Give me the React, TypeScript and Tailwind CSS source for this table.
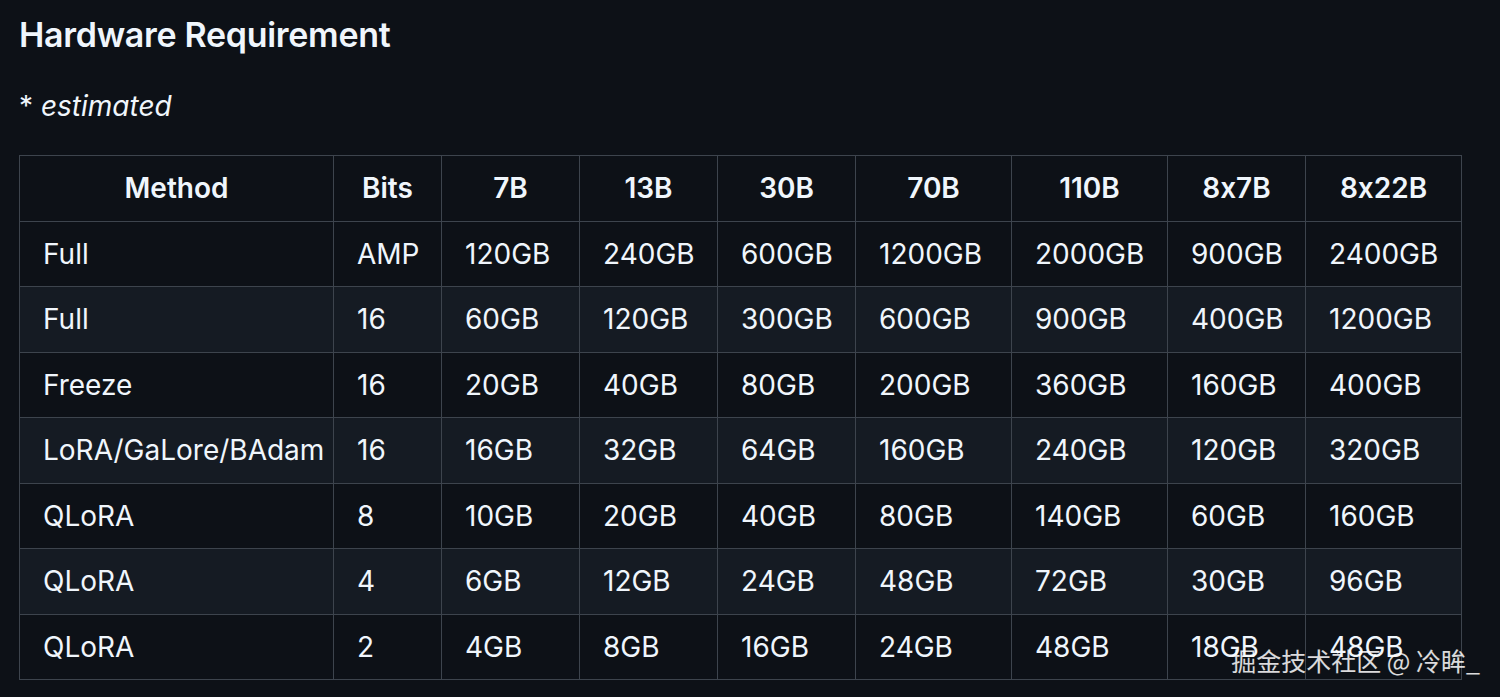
import React from 'react';

const cols = [
  { label: 'Method', w: 'w-[314px]' },
  { label: 'Bits', w: 'w-[108px]' },
  { label: '7B', w: 'w-[138px]' },
  { label: '13B', w: 'w-[138px]' },
  { label: '30B', w: 'w-[138px]' },
  { label: '70B', w: 'w-[156px]' },
  { label: '110B', w: 'w-[156px]' },
  { label: '8x7B', w: 'w-[138px]' },
  { label: '8x22B', w: 'w-[156px]' },
];

const rows = [
  ['Full', 'AMP', '120GB', '240GB', '600GB', '1200GB', '2000GB', '900GB', '2400GB'],
  ['Full', '16', '60GB', '120GB', '300GB', '600GB', '900GB', '400GB', '1200GB'],
  ['Freeze', '16', '20GB', '40GB', '80GB', '200GB', '360GB', '160GB', '400GB'],
  ['LoRA/GaLore/BAdam', '16', '16GB', '32GB', '64GB', '160GB', '240GB', '120GB', '320GB'],
  ['QLoRA', '8', '10GB', '20GB', '40GB', '80GB', '140GB', '60GB', '160GB'],
  ['QLoRA', '4', '6GB', '12GB', '24GB', '48GB', '72GB', '30GB', '96GB'],
  ['QLoRA', '2', '4GB', '8GB', '16GB', '24GB', '48GB', '18GB', '48GB'],
];

export default function App() {
  return (
    <div className="relative min-h-[697px] bg-[#0d1117] px-[19px] pt-[14px] text-[#f0f6fc] font-['Inter','Noto_Sans',sans-serif] [font-feature-settings:'calt'_0]">
      <h3 className="text-[34px] font-semibold leading-[1.25] tracking-[-0.3px]">Hardware Requirement</h3>
      <p className="mt-[28px] text-[28px] leading-[1.5]">
        * <em>estimated</em>
      </p>
      <table className="mt-[28px] w-[1442px] table-fixed border-collapse text-[28px] leading-[1.5]">
        <thead>
          <tr className="bg-[#0d1117]">
            {cols.map((c) => (
              <th
                key={c.label}
                className={`${c.w} h-[66px] border-[1.5px] border-[#3d444d] px-[23px] text-center font-semibold`}
              >
                {c.label}
              </th>
            ))}
          </tr>
        </thead>
        <tbody>
          {rows.map((r, i) => (
            <tr key={i} className={i % 2 === 1 ? 'bg-[#151b23]' : 'bg-[#0d1117]'}>
              {r.map((cell, j) => (
                <td key={j} className="h-[65.5px] border-[1.5px] border-[#3d444d] px-[23px] text-left font-normal whitespace-nowrap">
                  {cell}
                </td>
              ))}
            </tr>
          ))}
        </tbody>
      </table>
      <div className="absolute right-[20px] top-[648px] text-[25px] leading-none text-white/85 font-['Noto_Sans_CJK_SC',sans-serif]">
        掘金技术社区 @ 冷眸_
      </div>
    </div>
  );
}
